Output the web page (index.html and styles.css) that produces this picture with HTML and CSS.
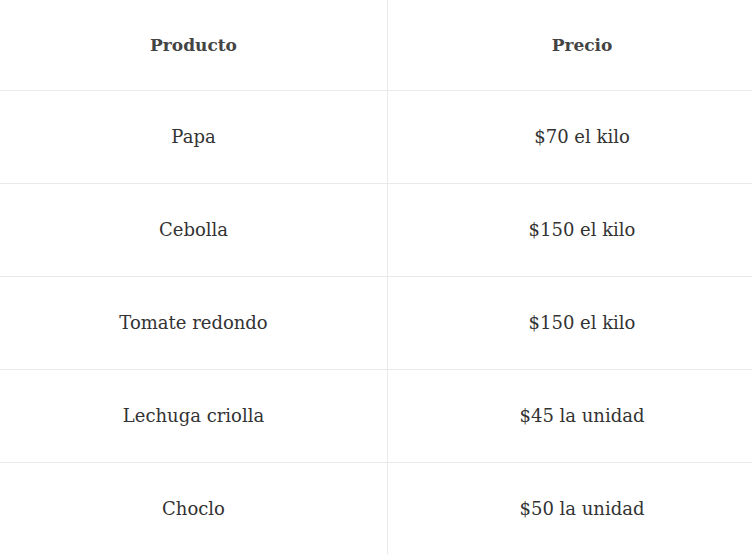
FILE: index.html
```html
<!DOCTYPE html>
<html lang="es">
<head>
<meta charset="utf-8">
<title>Precios</title>
<link rel="stylesheet" href="styles.css">
</head>
<body>
<table class="prices">
  <thead>
    <tr><th class="col-prod">Producto</th><th class="col-price">Precio</th></tr>
  </thead>
  <tbody>
    <tr><td class="col-prod">Papa</td><td class="col-price">$70 el kilo</td></tr>
    <tr><td class="col-prod">Cebolla</td><td class="col-price">$150 el kilo</td></tr>
    <tr><td class="col-prod">Tomate redondo</td><td class="col-price">$150 el kilo</td></tr>
    <tr><td class="col-prod">Lechuga criolla</td><td class="col-price">$45 la unidad</td></tr>
    <tr><td class="col-prod">Choclo</td><td class="col-price">$50 la unidad</td></tr>
  </tbody>
</table>
</body>
</html>
```
FILE: styles.css
```css
html, body {
  margin: 0;
  padding: 0;
  overflow: hidden;
  background: #fff;
}
.prices {
  border-collapse: collapse;
  width: 776px;
  table-layout: fixed;
  font-family: "DejaVu Serif", "Liberation Serif", serif;
  font-size: 18px;
  color: #333;
}
.prices th, .prices td {
  text-align: center;
  line-height: 24px;
  padding: 34px 0;
  border-bottom: 1px solid #e9e9e9;
  font-weight: normal;
}
.prices th {
  padding: 33px 0;
  font-weight: bold;
  font-size: 17px;
  color: #444;
}
.prices .col-prod {
  width: 387px;
  border-right: 1px solid #e9e9e9;
}
```
